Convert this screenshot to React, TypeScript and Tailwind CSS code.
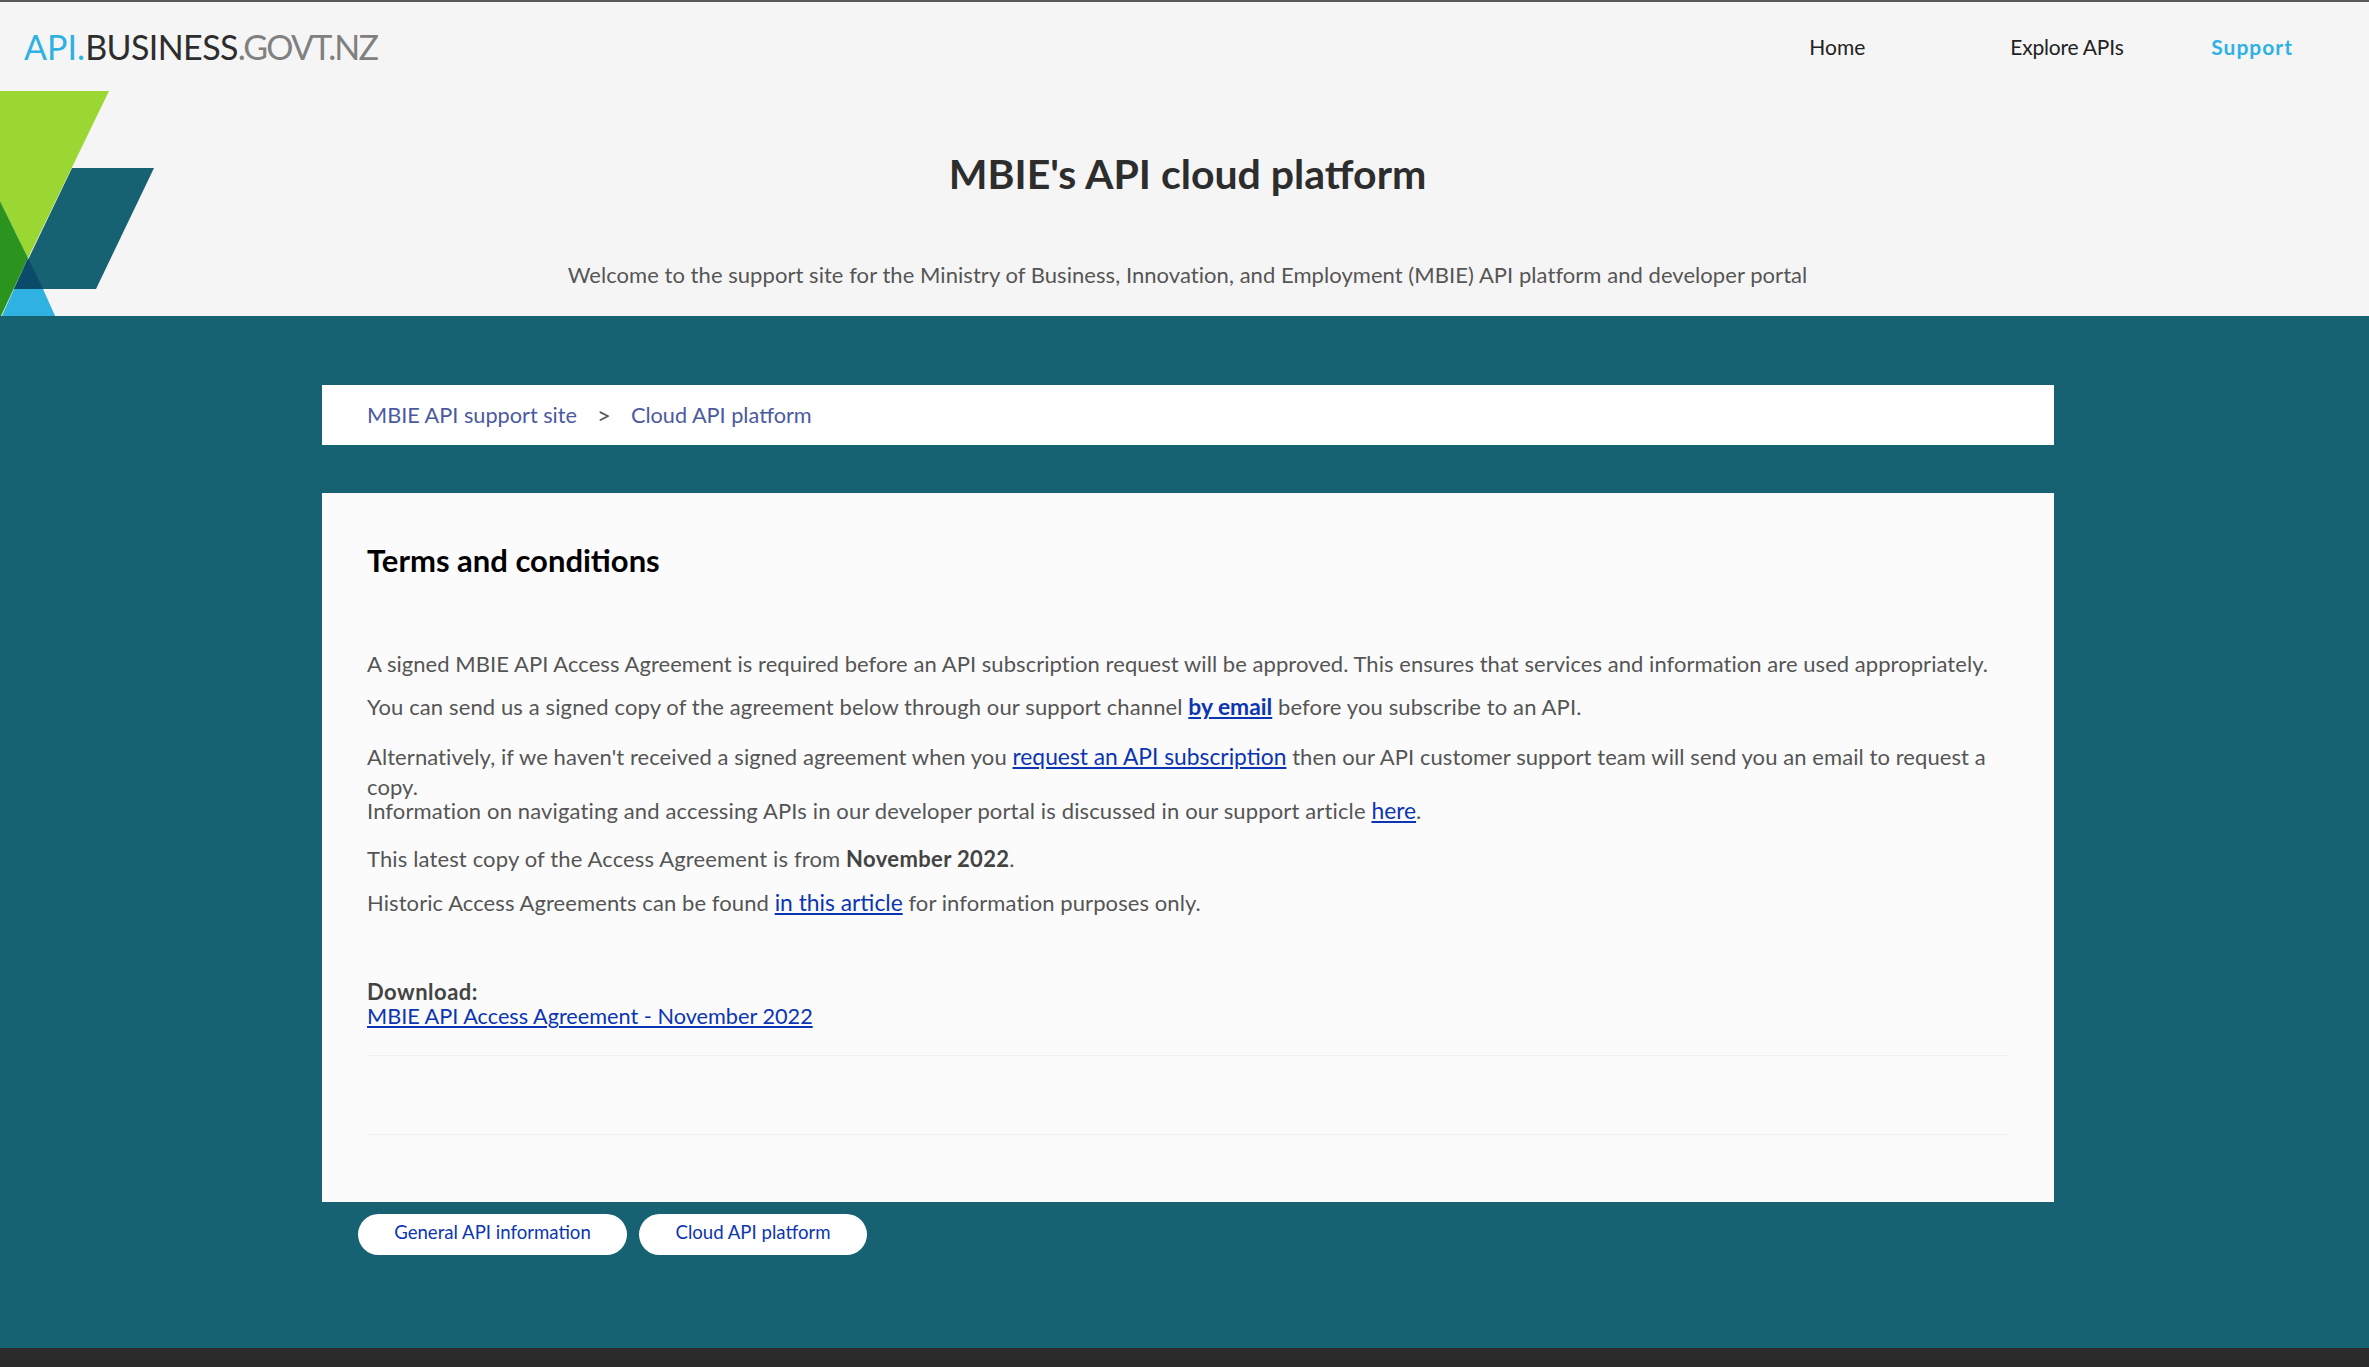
export default function App() {
  const link = "text-[#0b35b3] underline text-[22.8px] tracking-normal";
  return (
    <div className="min-h-[1367px] flex flex-col bg-[#166272] font-['Lato','Liberation_Sans',sans-serif] text-[#555555] text-[22px] tracking-[0.05px]">
      <header className="relative h-[316px] bg-[#f5f5f5] border-t-2 border-[#5a5a5a] overflow-hidden">
        <svg className="absolute left-0 top-[89px]" width="156" height="227" viewBox="0 91 156 227">
          <polygon points="72,168 154,168 96,289 14,289" fill="#166272" />
          <polygon points="14,289 43,289 56,318 1,318" fill="#2fb1e1" />
          <polygon points="0,91 109,91 28,258 0,201" fill="#9bd732" />
          <polygon points="0,201 28,258 1,316 0,316" fill="#2b941f" />
          <polygon points="28,258 43,289 14,289" fill="#0b4a69" />
        </svg>
        <div className="flex items-center justify-between h-[89px] pl-[24px] pr-[76px]">
          <div className="text-[34px]">
            <span className="text-[#2fb1e1]">API.</span>
            <span className="text-[#2d2d2d] tracking-[-0.6px]">BUSINESS</span>
            <span className="text-[#808080] tracking-[-1.8px]">.GOVT.NZ</span>
          </div>
          <nav className="flex text-[21px] text-[#222222]">
            <span className="w-[201px]">Home</span>
            <span className="w-[201px] tracking-[-0.2px]">Explore APIs</span>
            <span className="font-bold text-[#2fb1e1] tracking-[1px]">Support</span>
          </nav>
        </div>
        <h1 className="text-center pl-[6px] text-[41px] font-bold text-[#2d2d2d] mt-[55px] leading-[56px] tracking-normal">MBIE's API cloud platform</h1>
        <p className="text-center pl-[6px] mt-[58px] leading-[30px]">Welcome to the support site for the Ministry of Business, Innovation, and Employment (MBIE) API platform and developer portal</p>
      </header>
      <main className="flex-1 w-[1732px] ml-[322px] pt-[69px]">
        <div className="h-[60px] bg-white flex items-center px-[45px] text-[#4a5aa0] text-[21.7px] tracking-normal">
          <span>MBIE API support site</span>
          <span className="mx-[20px] text-[24px] text-[#555555]">&gt;</span>
          <span>Cloud API platform</span>
        </div>
        <section className="mt-[48px] h-[709px] bg-[#fbfbfb] px-[45px] pt-[46px]">
          <h2 className="text-[31px] font-bold text-black leading-[42px] tracking-normal">Terms and conditions</h2>
          <p className="mt-[68px] leading-[30px]">A signed MBIE API Access Agreement is required before an API subscription request will be approved. This ensures that services and information are used appropriately.</p>
          <p className="mt-[12px] leading-[30px] h-[30px] tracking-[0.12px]">You can send us a signed copy of the agreement below through our support channel <a className={`${link} font-bold`}>by email</a> before you subscribe to an API.</p>
          <p className="mt-[20px] leading-[30px] h-[60px] tracking-[0.08px]">Alternatively, if we haven't received a signed agreement when you <a className={link}>request an API subscription</a> then our API customer support team will send you an email to request a copy.</p>
          <p className="leading-[25px] h-[25px] -mt-[3px] tracking-[0.14px]">Information on navigating and accessing APIs in our developer portal is discussed in our support article <a className={link}>here</a>.</p>
          <p className="mt-[21px] leading-[30px] h-[30px] tracking-[0.14px]">This latest copy of the Access Agreement is from <b className="text-[#444444] tracking-[0.35px]">November 2022</b>.</p>
          <p className="mt-[13px] leading-[30px] h-[30px] tracking-[0.08px]">Historic Access Agreements can be found <a className={link}>in this article</a> for information purposes only.</p>
          <p className="mt-[62px] leading-[25px] h-[25px] font-bold text-[#444444] tracking-[0.5px]">Download:</p>
          <p className="leading-[24px] h-[24px]"><a className="text-[#0b35b3] underline text-[21.7px] tracking-normal">MBIE API Access Agreement - November 2022</a></p>
          <div className="mt-[27px] h-[80px] border-y border-[#f0f0f0]" />
        </section>
        <div className="flex gap-[12px] ml-[36px] mt-[12px] text-[18.6px] text-[#0b35b3] tracking-normal">
          <span className="h-[41px] w-[269px] rounded-full bg-white flex items-center justify-center pb-[3px]">General API information</span>
          <span className="h-[41px] w-[228px] rounded-full bg-white flex items-center justify-center pb-[3px]">Cloud API platform</span>
        </div>
      </main>
      <footer className="h-[19px] bg-[#2b2b2b]" />
    </div>
  );
}
